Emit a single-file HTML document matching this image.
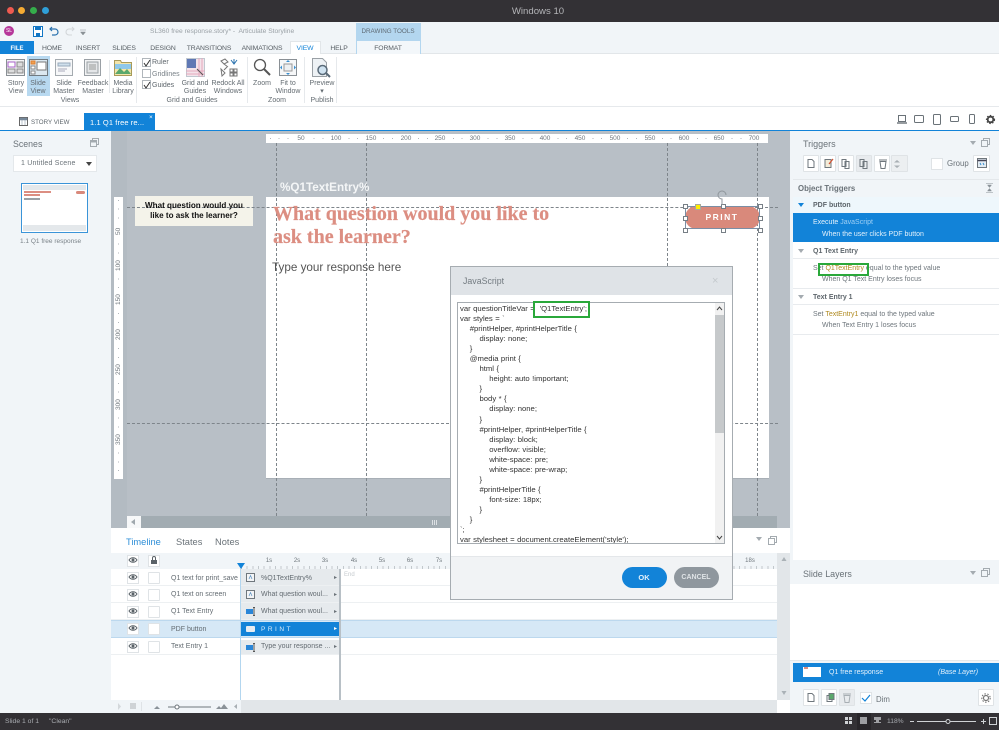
<!DOCTYPE html>
<html><head><meta charset="utf-8"><style>
html,body{margin:0;padding:0;background:#fff}
#r{position:relative;width:999px;height:730px;overflow:hidden;font-family:"Liberation Sans",sans-serif;font-size:7px;color:#5e666c;background:#fff;filter:blur(.3px)}
#r div,#r span.t,#r svg{position:absolute}
.t{position:absolute;white-space:nowrap;line-height:10px;margin-top:2px}
.c{transform:translateX(-50%);text-align:center}
.tab{top:41.500px;font-size:6.800px;color:#565d63;letter-spacing:-.1px}
.rl{font-size:7px;color:#646c72;text-align:center;line-height:8px;transform:translateX(-50%);white-space:nowrap}
.sep{background:#e6e9ec;width:1px;top:57px;height:46px}
.ck{width:7px;height:7px;border:1px solid #b0b6bb;background:#fff}
.rn{position:absolute;top:134px;font-size:6.500px;color:#6f777d;transform:translateX(-50%);line-height:9px;white-space:nowrap;background:#fff;padding:0 2px}
.rv{left:114px;width:9px;font-size:6.500px;color:#6f777d;height:14px;line-height:9px;writing-mode:vertical-rl;transform:rotate(180deg);text-align:center;background:#fff}
.gv{top:143px;height:373px;width:0;border-left:1px dashed #7e858b}
.gh{height:0;left:127px;width:651px;border-top:1px dashed #7e858b}
.h{width:3px;height:3px;border:1px solid #777f86;background:#fff}
.code{left:460px;color:#333;white-space:pre}
.row{left:111px;width:666px;height:17px;border-bottom:1px solid #edf0f2;box-sizing:border-box}
.eb{left:127px;width:10px;height:10px;border:1px solid #dfe3e6;background:#fff}
.lb{left:148px;width:10px;height:10px;border:1px solid #dfe3e6;background:#fff;border-radius:1px}
.bar{left:241px;width:98px;height:16px;background:#e6eaed}
.tl{font-size:7px;color:#646c72}
.ts{position:absolute;top:557px;font-size:6px;color:#6f777d;transform:translateX(-50%);line-height:8px}
.tb{top:155px;width:14px;height:15px;border:1px solid #dfe3e6;background:#fff;border-radius:1px}
.hd{left:793px;width:206px;height:17px;background:#fff;border-bottom:1px solid #e8ebee;box-sizing:border-box}
.tr{font-size:7px;color:#6e767c}
.trb{font-size:7px;font-weight:bold;color:#5e666c}
</style></head><body><div id="r">

<!-- title bar -->
<div style="left:0;top:0;width:999px;height:22px;background:#333135"></div>
<div style="left:6.500px;top:6.500px;width:7px;height:7px;border-radius:50%;background:#ef5a50"></div>
<div style="left:18px;top:6.500px;width:7px;height:7px;border-radius:50%;background:#f5ab33"></div>
<div style="left:30px;top:6.500px;width:7px;height:7px;border-radius:50%;background:#35ad4b"></div>
<div style="left:42px;top:6.500px;width:7px;height:7px;border-radius:50%;background:#2f9fd8"></div>
<span class="t c" style="left:538px;top:3.500px;color:#b4b5b8;font-size:9.600px;line-height:11px">Windows 10</span>

<!-- QAT -->
<div style="left:0;top:22px;width:999px;height:32px;background:#f1f5f8;border-bottom:1px solid #e2e6e9;box-sizing:border-box"></div>
<div style="left:4px;top:26px;width:10px;height:10px;border-radius:50%;background:#b6379a"></div>
<span class="t c" style="left:9px;top:24px;color:#fff;font-size:5px">SL</span>
<svg style="left:33px;top:26px" width="10" height="11" viewBox="0 0 10 11"><path d="M.5.5h9v10h-9z" fill="#fff" stroke="#1276c4"/><path d="M2 1h6v3H2zM3 7h4v3H3z" fill="#1276c4"/></svg>
<svg style="left:49px;top:26px" width="10" height="10" viewBox="0 0 10 10"><path d="M3 1 1 3l2 2M1 3h5a3 3 0 0 1 0 6H3" fill="none" stroke="#2a72ae" stroke-width="1.200"/></svg>
<svg style="left:65px;top:26px" width="10" height="10" viewBox="0 0 10 10"><path d="M7 1l2 2-2 2M9 3H4a3 3 0 0 0 0 6h3" fill="none" stroke="#d2d6d9" stroke-width="1.100"/></svg>
<svg style="left:80px;top:29px" width="6" height="6" viewBox="0 0 6 6"><path d="M0 1h6M.5 3h5L3 6z" fill="#8a9196" stroke="#8a9196" stroke-width=".5"/></svg>
<span class="t" style="left:150px;top:25px;font-size:6.700px;color:#9aa1a6">SL360 free response.story* -&nbsp; Articulate Storyline</span>

<!-- tabs -->
<div style="left:0;top:41px;width:34px;height:13px;background:#1283d8"></div>
<span class="t c" style="left:17px;top:41.500px;color:#fff;font-size:6px;font-weight:bold">FILE</span>
<span class="t tab c" style="left:52px">HOME</span>
<span class="t tab c" style="left:88px">INSERT</span>
<span class="t tab c" style="left:124px">SLIDES</span>
<span class="t tab c" style="left:163px">DESIGN</span>
<span class="t tab c" style="left:209px">TRANSITIONS</span>
<span class="t tab c" style="left:262px">ANIMATIONS</span>
<div style="left:290px;top:41px;width:31px;height:14px;background:#fff;border:1px solid #e2e6e9;border-bottom:0;box-sizing:border-box"></div>
<span class="t tab c" style="left:305px;color:#1283d8">VIEW</span>
<span class="t tab c" style="left:339px">HELP</span>
<div style="left:356px;top:23px;width:65px;height:18px;background:#b3d6ef"></div>
<span class="t c" style="left:388px;top:25px;font-size:6.300px;color:#5e6a74">DRAWING TOOLS</span>
<div style="left:356px;top:41px;width:65px;height:13px;background:#f3f7fa;border:1px solid #b3d6ef;border-bottom:0;border-top:0;box-sizing:border-box"></div>
<span class="t tab c" style="left:388px">FORMAT</span>

<!-- ribbon -->
<div style="left:0;top:54px;width:999px;height:52px;background:#fff;border-bottom:1px solid #e6e9ec"></div>
<div style="left:27px;top:56px;width:23px;height:40px;background:#b8d9f0"></div>
<svg style="left:6px;top:59px" width="19" height="17" viewBox="0 0 19 17"><rect x=".5" y=".5" width="18" height="16" fill="#f4f5f6" stroke="#8a9095"/><rect x="2" y="3" width="7" height="5" fill="#fff" stroke="#a860c8"/><rect x="11" y="3" width="6" height="5" fill="#ddd" stroke="#888"/><rect x="2" y="10" width="7" height="4" fill="#ddd" stroke="#888"/><rect x="11" y="10" width="6" height="4" fill="#ddd" stroke="#888"/></svg>
<svg style="left:29px;top:59px" width="19" height="17" viewBox="0 0 19 17"><rect x=".5" y=".5" width="18" height="16" fill="#dce8f0" stroke="#717a80"/><rect x="2" y="2" width="4" height="3" fill="#f0a050" stroke="#e08030"/><rect x="2" y="7" width="4" height="3" fill="#fff" stroke="#888"/><rect x="2" y="12" width="4" height="3" fill="#fff" stroke="#888"/><rect x="8" y="3" width="9" height="8" fill="#fff" stroke="#777"/></svg>
<svg style="left:55px;top:59px" width="18" height="17" viewBox="0 0 18 17"><rect x=".5" y=".5" width="17" height="16" fill="#f7f8f9" stroke="#a5abb0"/><rect x="3" y="4" width="12" height="3" fill="#d0e0ec" stroke="#9ab"/><path d="M3 10h9M3 12h7" stroke="#aab" fill="none"/></svg>
<svg style="left:84px;top:59px" width="17" height="17" viewBox="0 0 17 17"><rect x=".5" y=".5" width="16" height="16" fill="#f2f3f4" stroke="#9aa0a5"/><rect x="3" y="3" width="11" height="11" fill="#e4e6e8" stroke="#9aa0a5"/><path d="M5 6h7M5 8h7M5 10h7" stroke="#999"/></svg>
<div class="sep" style="left:109px;top:60px;height:33px"></div>
<svg style="left:114px;top:59px" width="18" height="17" viewBox="0 0 18 17"><path d="M.5 1.500h6l1 2h10v13H.5z" fill="#f4e5a8" stroke="#a89a5a"/><rect x="1" y="5" width="16" height="5" fill="#8ec8ea"/><path d="M1 15l5-6 4 4 3-3 4 5z" fill="#5aa86c"/></svg>
<div class="rl" style="left:16px;top:80px">Story<br>View</div>
<div class="rl" style="left:38px;top:80px">Slide<br>View</div>
<div class="rl" style="left:64px;top:80px">Slide<br>Master</div>
<div class="rl" style="left:93px;top:80px">Feedback<br>Master</div>
<div class="rl" style="left:123px;top:80px">Media<br>Library</div>
<div class="rl" style="left:70px;top:97px">Views</div>
<div class="sep" style="left:136px"></div>
<div class="ck" style="left:142px;top:58px"></div><div class="ck" style="left:142px;top:69px"></div><div class="ck" style="left:142px;top:80px"></div>
<svg style="left:143px;top:59px" width="8" height="8" viewBox="0 0 8 8"><path d="M1 4l2 3 4-6" fill="none" stroke="#333" stroke-width="1"/></svg>
<svg style="left:143px;top:81px" width="8" height="8" viewBox="0 0 8 8"><path d="M1 4l2 3 4-6" fill="none" stroke="#333" stroke-width="1"/></svg>
<span class="t" style="left:152px;top:56px;font-size:7px;color:#5e666c">Ruler</span>
<span class="t" style="left:152px;top:67.500px;font-size:7px;color:#7a8288">Gridlines</span>
<span class="t" style="left:152px;top:79px;font-size:7px;color:#5e666c">Guides</span>
<svg style="left:186px;top:58px" width="19" height="19" viewBox="0 0 19 19"><rect x=".5" y=".5" width="18" height="18" fill="#f3e3ea" stroke="#c0c8d0"/><rect x="1" y="1" width="9" height="9" fill="#5f78b4"/><path d="M13 0v19M16 0v19M0 13h19M0 16h19" stroke="#e4a8bc" fill="none"/><path d="M11 11l6 6" stroke="#555"/></svg>
<svg style="left:219px;top:58px" width="19" height="19" viewBox="0 0 19 19"><g fill="none" stroke="#777"><path d="M2 3l4-2 3 3-4 2zM5 6l4 3"/><rect x="11" y="11" width="3" height="3"/><rect x="15" y="11" width="3" height="3"/><rect x="11" y="15" width="3" height="3"/><rect x="15" y="15" width="3" height="3"/><path d="M2 11l4 4-3 3zM8 9l-3 3"/></g><path d="M12 2l3 4 3-4M15 1v5" fill="none" stroke="#2a72ae"/></svg>
<div class="rl" style="left:195px;top:80px">Grid and<br>Guides</div>
<div class="rl" style="left:228px;top:80px">Redock All<br>Windows</div>
<div class="rl" style="left:192px;top:97px">Grid and Guides</div>
<div class="sep" style="left:247px"></div>
<svg style="left:253px;top:58px" width="18" height="18" viewBox="0 0 18 18"><circle cx="7" cy="7" r="5.500" fill="#fff" stroke="#555" stroke-width="1.300"/><path d="M11 11l6 6" stroke="#555" stroke-width="2"/></svg>
<svg style="left:279px;top:59px" width="18" height="17" viewBox="0 0 18 17"><rect x=".5" y=".5" width="17" height="16" fill="#f6f7f8" stroke="#8a9095"/><rect x="5" y="5" width="8" height="7" fill="#eef0f2" stroke="#999"/><path d="M9 1l2 2H7zM9 16l2-2H7zM1 8.500l2-2v4zM17 8.500l-2-2v4z" fill="#3a8fd0"/></svg>
<div class="rl" style="left:262px;top:80px">Zoom</div>
<div class="rl" style="left:288px;top:80px">Fit to<br>Window</div>
<div class="rl" style="left:277px;top:97px">Zoom</div>
<div class="sep" style="left:304px"></div>
<svg style="left:312px;top:58px" width="20" height="20" viewBox="0 0 20 20"><path d="M.5.5h10l4 4v14H.5z" fill="#eef2f5" stroke="#9aa0a5"/><circle cx="10.500" cy="12" r="4.500" fill="#cfe2f0" stroke="#5a6a78" stroke-width="1.500"/><path d="M14 15l4 4" stroke="#5a6a78" stroke-width="2"/></svg>
<div class="rl" style="left:322px;top:80px">Preview<br>▾</div>
<div class="rl" style="left:322px;top:97px">Publish</div>
<div class="sep" style="left:336px"></div>

<!-- view tabs -->
<svg style="left:19px;top:117px" width="9" height="9" viewBox="0 0 9 9"><rect x=".5" y=".5" width="8" height="8" fill="#fff" stroke="#666"/><path d="M1 1h7v2H1zM3 3v5M6 3v5" fill="#789" stroke="#789" stroke-width=".5"/></svg>
<span class="t" style="left:31px;top:116px;font-size:6.200px;color:#5e666c">STORY VIEW</span>
<div style="left:84px;top:113px;width:71px;height:17px;background:#1283d8"></div>
<span class="t" style="left:90px;top:115.500px;color:#fff;font-size:7.500px;letter-spacing:.1px">1.1 Q1 free re...</span>
<span class="t" style="left:149px;top:111px;color:#fff;font-size:6.500px">×</span>
<svg style="left:896px;top:113px" width="100" height="12" viewBox="0 0 100 12"><g fill="none" stroke="#6a7278"><path d="M2.500 2.500h7v6h-7z"/><path d="M1 10h10" stroke-width="1.400"/><rect x="18.500" y="2.500" width="9" height="7" rx="1"/><rect x="37.500" y="1.500" width="7" height="10" rx="1"/><rect x="54.500" y="3.500" width="8" height="5" rx="1"/><rect x="73.500" y="1.500" width="5" height="9" rx="1"/></g><circle cx="94.500" cy="6.500" r="2.800" fill="none" stroke="#444" stroke-width="1.800"/><circle cx="94.500" cy="6.500" r="4" fill="none" stroke="#444" stroke-width="1.200" stroke-dasharray="1.500 1.500"/></svg>
<div style="left:0;top:130px;width:999px;height:1.500px;background:#1283d8"></div>

<!-- scenes panel -->
<div style="left:0;top:131px;width:111px;height:582px;background:#f1f5f8"></div>
<span class="t" style="left:13px;top:136px;font-size:8.800px;line-height:12px;color:#6a7278">Scenes</span>
<svg style="left:90px;top:138px" width="9" height="9" viewBox="0 0 9 9"><g fill="none" stroke="#a4abb0"><rect x=".5" y="2.500" width="6" height="6"/><path d="M2.500 2.500v-2h6v6h-2"/></g><rect x="1" y="3" width="5" height="1.500" fill="#a4abb0"/></svg>
<div style="left:13px;top:155px;width:84px;height:17px;background:#fff;border:1px solid #e4e8eb;box-sizing:border-box"></div>
<span class="t" style="left:21px;top:157px;font-size:7px;color:#6a7278;letter-spacing:.2px">1 Untitled Scene</span>
<svg style="left:86px;top:162px" width="6" height="4" viewBox="0 0 6 4"><path d="M0 0h6L3 4z" fill="#444"/></svg>
<div style="left:21px;top:183px;width:67px;height:50px;background:#fff;border:1.500px solid #3a94d8;box-sizing:border-box"></div>
<div style="left:23px;top:185px;width:63px;height:5px;background:#e4e8eb"></div>
<div style="left:23px;top:225px;width:63px;height:6px;background:#e4e8eb"></div>
<div style="left:24px;top:191px;width:27px;height:2px;background:#dc8e82"></div>
<div style="left:24px;top:194px;width:16px;height:2px;background:#dc8e82"></div>
<div style="left:24px;top:198px;width:16px;height:1.500px;background:#9ba0a5"></div>
<div style="left:76px;top:191px;width:9px;height:3px;background:#d9897b;border-radius:2px"></div>
<span class="t" style="left:20px;top:235px;font-size:6.500px;color:#7a8288">1.1 Q1 free response</span>

<!-- canvas -->
<div style="left:111px;top:131px;width:679px;height:397px;background:#b8bfc6"></div>
<div style="left:111px;top:131px;width:16px;height:397px;background:#b3bbc2"></div>
<div style="left:266px;top:134px;width:502px;height:9px;background:#fff"></div>
<div style="left:270px;top:138px;width:496px;height:1px;background:repeating-linear-gradient(90deg,#b0b6bb 0 1px,transparent 1px 8.710px)"></div>
<span class="rn" style="left:301px">50</span><span class="rn" style="left:336px">100</span><span class="rn" style="left:371px">150</span><span class="rn" style="left:406px">200</span><span class="rn" style="left:440px">250</span><span class="rn" style="left:475px">300</span><span class="rn" style="left:510px">350</span><span class="rn" style="left:545px">400</span><span class="rn" style="left:580px">450</span><span class="rn" style="left:615px">500</span><span class="rn" style="left:650px">550</span><span class="rn" style="left:684px">600</span><span class="rn" style="left:719px">650</span><span class="rn" style="left:754px">700</span>
<div style="left:114px;top:197px;width:9px;height:282px;background:#fff"></div>
<div style="left:118px;top:200px;width:1px;height:276px;background:repeating-linear-gradient(180deg,#b0b6bb 0 1px,transparent 1px 8.710px)"></div>
<div class="rv" style="top:224px">50</div><div class="rv" style="top:259px">100</div><div class="rv" style="top:293px">150</div><div class="rv" style="top:328px">200</div><div class="rv" style="top:363px">250</div><div class="rv" style="top:398px">300</div><div class="rv" style="top:433px">350</div>

<div style="left:266px;top:197px;width:503px;height:282px;background:#fff;border-bottom:1px solid #a8afb6;box-sizing:border-box"></div>
<div style="left:135px;top:196px;width:118px;height:30px;background:#f4f3ea"></div>
<div class="gv" style="left:276px"></div><div class="gv" style="left:366px"></div><div class="gv" style="left:667px"></div><div class="gv" style="left:757px"></div>
<div class="gh" style="top:207px"></div><div class="gh" style="top:423px"></div>

<div class="t" style="left:135px;top:199px;width:118px;text-align:center;font-size:8.100px;font-weight:bold;color:#111;line-height:10px;white-space:normal">What question would you<br>like to ask the learner?</div>
<span class="t" style="left:280px;top:179px;font-size:11.700px;line-height:14px;font-weight:bold;color:#f4f6f7">%Q1TextEntry%</span>
<div class="t" style="left:273px;top:200.500px;font-family:'Liberation Serif',serif;font-size:20px;font-weight:bold;color:#dc8e82;line-height:23.500px;-webkit-text-stroke:.2px #dc8e82">What question would you like to<br>ask the learner?</div>
<span class="t" style="left:272px;top:258px;font-size:11.700px;line-height:15px;color:#555">Type your response here</span>

<div style="left:685px;top:206px;width:75px;height:23px;border-radius:12px;background:#d9897b"></div>
<span class="t c" style="left:722px;top:209px;color:#fff;font-size:8.500px;line-height:12px;font-weight:bold;letter-spacing:1.500px">PRINT</span>
<div style="left:685px;top:206px;width:75px;height:23px;border:1px solid #7a8ea5;box-sizing:border-box"></div>
<div class="h" style="left:683px;top:204px"></div><div class="h" style="left:721px;top:204px"></div><div class="h" style="left:758px;top:204px"></div>
<div class="h" style="left:683px;top:216px"></div><div class="h" style="left:758px;top:216px"></div>
<div class="h" style="left:683px;top:228px"></div><div class="h" style="left:721px;top:228px"></div><div class="h" style="left:758px;top:228px"></div>
<div style="left:695px;top:204px;width:4px;height:4px;background:#ffee00;border:.5px solid #aa9"></div>
<svg style="left:717px;top:190px" width="11" height="15" viewBox="0 0 11 15"><path d="M9 5a4 4 0 1 0-4 4v6" fill="none" stroke="#8f969c"/></svg>

<div style="left:127px;top:516px;width:650px;height:12px;background:#a2acb2"></div>
<div style="left:127px;top:516px;width:14px;height:12px;background:#f7f8f9"></div>
<svg style="left:131px;top:519px" width="5" height="6"><path d="M4 0v6L0 3z" fill="#a0a8ae"/></svg>
<div style="left:432px;top:520px;width:5px;height:5px;background:repeating-linear-gradient(90deg,#dde1e4 0 1px,#a2acb2 1px 2px)"></div>

<!-- timeline -->
<div style="left:111px;top:528px;width:666px;height:185px;background:#fff"></div>
<span class="t" style="left:126px;top:534px;font-size:9.300px;line-height:12px;color:#2f8fd8">Timeline</span>
<span class="t" style="left:176px;top:534px;font-size:9.300px;line-height:12px;color:#6a7278">States</span>
<span class="t" style="left:215px;top:534px;font-size:9.300px;line-height:12px;color:#6a7278">Notes</span>
<svg style="left:756px;top:537px" width="6" height="4"><path d="M0 0h6L3 4z" fill="#a4abb0"/></svg>
<svg style="left:768px;top:536px" width="9" height="9" viewBox="0 0 9 9"><g fill="none" stroke="#a4abb0"><rect x=".5" y="2.500" width="6" height="6"/><path d="M2.500 2.500v-2h6v6h-2"/></g></svg>
<div style="left:111px;top:553px;width:666px;height:16px;background:#f1f5f8"></div>
<div style="left:777px;top:553px;width:13px;height:147px;background:#e2e6e9"></div>
<svg style="left:781px;top:557px" width="6" height="140"><path d="M3 0l2.500 4h-5zM3 138l2.500-4h-5z" fill="#aab1b6"/></svg>
<div style="left:241px;top:566px;width:536px;height:3px;background:repeating-linear-gradient(90deg,#c2c8cc 0 1px,transparent 1px 5.660px)"></div>
<span class="ts" style="left:269px">1s</span><span class="ts" style="left:297px">2s</span><span class="ts" style="left:325px">3s</span><span class="ts" style="left:354px">4s</span><span class="ts" style="left:382px">5s</span><span class="ts" style="left:410px">6s</span><span class="ts" style="left:439px">7s</span><span class="ts" style="left:750px">18s</span>

<div class="row" style="top:569px"></div><div class="row" style="top:586px"></div><div class="row" style="top:603px"></div>
<div style="left:111px;top:620px;width:666px;height:18px;background:#d6e8f6;border:1px solid #bcd8ee;border-width:1px 0;box-sizing:border-box"></div>
<div class="row" style="top:638px"></div>
<svg width="0" height="0" style="left:0;top:0"><defs><g id="eye"><path d="M1 4c2-3 6-3 8 0-2 3-6 3-8 0z" fill="#fff" stroke="#5a6268"/><circle cx="5" cy="4" r="1.500" fill="#5a6268"/></g></defs></svg>
<div class="eb" style="top:555px"></div>
<svg style="left:128px;top:556px" width="10" height="8"><use href="#eye"/></svg>
<div class="eb" style="top:555px;left:148px"></div>
<svg style="left:150px;top:556px" width="8" height="8" viewBox="0 0 8 8"><path d="M1 4h6v4H1z" fill="#5a6268"/><path d="M2.500 4V2a1.500 1.500 0 0 1 3 0v2" fill="none" stroke="#5a6268"/></svg>
<div class="eb" style="top:572px"></div><svg style="left:128px;top:573px" width="10" height="8"><use href="#eye"/></svg><div class="lb" style="top:572px"></div>
<div class="eb" style="top:589px"></div><svg style="left:128px;top:590px" width="10" height="8"><use href="#eye"/></svg><div class="lb" style="top:589px"></div>
<div class="eb" style="top:606px"></div><svg style="left:128px;top:607px" width="10" height="8"><use href="#eye"/></svg><div class="lb" style="top:606px"></div>
<div class="eb" style="top:623px"></div><svg style="left:128px;top:624px" width="10" height="8"><use href="#eye"/></svg><div class="lb" style="top:623px"></div>
<div class="eb" style="top:641px"></div><svg style="left:128px;top:642px" width="10" height="8"><use href="#eye"/></svg><div class="lb" style="top:641px"></div>
<span class="t tl" style="left:171px;top:572px">Q1 text for print_save</span>
<span class="t tl" style="left:171px;top:588px">Q1 text on screen</span>
<span class="t tl" style="left:171px;top:605px">Q1 Text Entry</span>
<span class="t tl" style="left:171px;top:623px">PDF button</span>
<span class="t tl" style="left:171px;top:640px">Text Entry 1</span>

<div style="left:240px;top:569px;width:1px;height:131px;background:#b3d6ef"></div>
<div style="left:339px;top:569px;width:1.500px;height:131px;background:#b8c0c6"></div>
<svg style="left:237px;top:563px" width="8" height="6"><path d="M0 0h8L4 6z" fill="#1283d8"/></svg>
<span class="t" style="left:344px;top:568px;font-size:6px;color:#c6cbcf">End</span>

<div class="bar" style="top:569px"></div><div class="bar" style="top:586px"></div><div class="bar" style="top:603px"></div>
<div class="bar" style="top:622px;height:14px;background:#1283d8"></div>
<div class="bar" style="top:640px;height:14px"></div>
<svg width="0" height="0" style="left:0;top:0"><defs><g id="txt"><rect x=".5" y=".5" width="8" height="8" fill="#f2f4f6" stroke="#6f777d"/><path d="M3 6l1.500-3.500L6 6" fill="none" stroke="#5a90c0" stroke-width=".7"/></g><g id="ent"><rect x="0" y="2" width="7" height="5" fill="#2a86d8"/><path d="M7 .5h2M8 .5v8M7 8.500h2" fill="none" stroke="#555"/></g></defs></svg>
<svg style="left:246px;top:573px" width="9" height="9"><use href="#txt"/></svg>
<svg style="left:246px;top:590px" width="9" height="9"><use href="#txt"/></svg>
<svg style="left:246px;top:607px" width="9" height="9"><use href="#ent"/></svg>
<div style="left:246px;top:626px;width:9px;height:6px;background:#e6ecf1;border-radius:1px"></div>
<svg style="left:246px;top:643px" width="9" height="9"><use href="#ent"/></svg>
<span class="t tl" style="left:261px;top:572px">%Q1TextEntry%</span>
<span class="t tl" style="left:261px;top:588px">What question woul...</span>
<span class="t tl" style="left:261px;top:605px">What question woul...</span>
<span class="t tl" style="left:261px;top:623px;color:#dcecf8;letter-spacing:2.500px;font-size:6.500px">PRINT</span>
<span class="t tl" style="left:261px;top:640px">Type your response ...</span>
<span class="t" style="left:334px;top:571px;font-size:6px;color:#6a7278">▸</span><span class="t" style="left:334px;top:588px;font-size:6px;color:#6a7278">▸</span><span class="t" style="left:334px;top:605px;font-size:6px;color:#6a7278">▸</span><span class="t" style="left:334px;top:622px;font-size:6px;color:#fff">▸</span><span class="t" style="left:334px;top:640px;font-size:6px;color:#6a7278">▸</span>

<div style="left:111px;top:700px;width:130px;height:13px;background:#f1f5f8"></div>
<div style="left:241px;top:700px;width:536px;height:13px;background:#e2e6e9"></div>
<svg style="left:111px;top:700px" width="135" height="13" viewBox="0 0 135 13"><path d="M7 3v7l3-3.500z" fill="#d4d8db"/><rect x="19" y="3" width="6" height="6" fill="#cfd3d6"/><path d="M30.500 2v9" stroke="#dfe3e6"/><path d="M43 9l3-3 3 3z" fill="#8a9298"/><path d="M57 7h43" stroke="#9aa1a6" stroke-width="1.500"/><circle cx="66" cy="7" r="2" fill="#fff" stroke="#6f777d"/><path d="M105 9l3-3 2 2 3-4 4 5z" fill="#8a9298"/><path d="M126 4v5l-3-2.500z" fill="#a8afb4"/></svg>

<!-- right panel -->
<div style="left:790px;top:131px;width:209px;height:582px;background:#f1f5f8"></div>
<span class="t" style="left:803px;top:136px;font-size:9px;line-height:12px;color:#6a7278">Triggers</span>
<svg style="left:970px;top:141px" width="6" height="4"><path d="M0 0h6L3 4z" fill="#a4abb0"/></svg>
<svg style="left:981px;top:138px" width="9" height="9" viewBox="0 0 9 9"><g fill="none" stroke="#a4abb0"><rect x=".5" y="2.500" width="6" height="6"/><path d="M2.500 2.500v-2h6v6h-2"/></g></svg>
<div class="tb" style="left:803px"></div><div class="tb" style="left:820px"></div><div class="tb" style="left:838px"></div><div class="tb" style="left:856px;background:#e8ebee"></div><div class="tb" style="left:874px"></div><div class="tb" style="left:891px;width:15px;background:#eceff1"></div>
<svg style="left:803px;top:155px" width="105" height="17" viewBox="0 0 105 17"><g fill="#fff" stroke="#6f777d"><path d="M5 4.500h4l2 2v6H5z"/><path d="M22 4.500h6v8h-6z" fill="#f3ecd8"/><path d="M39 4.500h4v7h-4zM42 6.500h4v7h-4z"/><path d="M57 4.500h4v7h-4zM60 6.500h4v7h-4z" fill="#eceff1"/><path d="M77 6.500h6l-1 7h-4zM76 5h8"/></g><path d="M26 9l4-5" stroke="#d05030" stroke-width="1.200"/><path d="M94 5l3 2.500h-6zM94 13l3-2.500h-6z" fill="#a8afb4"/></svg>
<div style="left:931px;top:158px;width:10px;height:10px;background:#fff;border:1px solid #dfe3e6"></div>
<span class="t" style="left:947px;top:157px;font-size:7.800px;color:#6a7278">Group</span>
<div class="tb" style="left:973px;width:15px"></div>
<svg style="left:977px;top:158px" width="11" height="11" viewBox="0 0 11 11"><rect x=".5" y=".5" width="9" height="9" fill="#e4ecf3" stroke="#6f777d"/><path d="M.5 2.500h9" stroke="#445" stroke-width="1.500"/><path d="M3 5l1 2M6 5l1 2" stroke="#3a8fd0"/></svg>

<div style="left:793px;top:179px;width:206px;height:381px;background:#fff"></div>
<div style="left:793px;top:179px;width:206px;height:18px;background:#f1f5f8;border-top:1px solid #e4e8eb;box-sizing:border-box"></div>
<span class="t" style="left:798px;top:182px;font-size:7.800px;font-weight:bold;color:#6a7278">Object Triggers</span>
<svg style="left:986px;top:183px" width="7" height="10" viewBox="0 0 7 10"><path d="M0 .5h7M0 9.500h7M1.500 2h4L3.500 4.500zM1.500 8h4L3.500 5.500z" fill="#8a9298" stroke="#8a9298" stroke-width=".5"/></svg>
<div style="left:793px;top:197px;width:206px;height:16px;background:#eef7fc"></div>
<svg style="left:798px;top:203px" width="6" height="4"><path d="M0 0h6L3 4z" fill="#1283d8"/></svg>
<span class="t trb" style="left:813px;top:199px">PDF button</span>
<div style="left:793px;top:213px;width:206px;height:29px;background:#1283d8"></div>
<span class="t tr" style="left:813px;top:216px;color:#e4f1fb">Execute <span style="color:#9fd0f5">JavaScript</span></span>
<span class="t tr" style="left:822px;top:228px;color:#e4f1fb">When the user clicks PDF button</span>
<div class="hd" style="top:242px"></div>
<svg style="left:798px;top:249px" width="6" height="4"><path d="M0 0h6L3 4z" fill="#a4abb0"/></svg>
<span class="t trb" style="left:813px;top:245px">Q1 Text Entry</span>
<span class="t tr" style="left:813px;top:262px">Set <span style="color:#b08a20">Q1TextEntry</span> equal to the typed value</span>
<span class="t tr" style="left:822px;top:273px">When Q1 Text Entry loses focus</span>
<div style="left:818px;top:263px;width:51px;height:13px;border:2px solid #2aa83a;box-sizing:border-box"></div>
<div class="hd" style="top:288px;border-top:1px solid #e8ebee"></div>
<svg style="left:798px;top:295px" width="6" height="4"><path d="M0 0h6L3 4z" fill="#a4abb0"/></svg>
<span class="t trb" style="left:813px;top:291px">Text Entry 1</span>
<span class="t tr" style="left:813px;top:308px">Set <span style="color:#b08a20">TextEntry1</span> equal to the typed value</span>
<span class="t tr" style="left:822px;top:319px">When Text Entry 1 loses focus</span>
<div style="left:793px;top:334px;width:206px;height:1px;background:#e8ebee"></div>

<span class="t" style="left:803px;top:566px;font-size:8.900px;line-height:12px;color:#6a7278">Slide Layers</span>
<svg style="left:970px;top:571px" width="6" height="4"><path d="M0 0h6L3 4z" fill="#a4abb0"/></svg>
<svg style="left:981px;top:568px" width="9" height="9" viewBox="0 0 9 9"><g fill="none" stroke="#a4abb0"><rect x=".5" y="2.500" width="6" height="6"/><path d="M2.500 2.500v-2h6v6h-2"/></g></svg>
<div style="left:790px;top:584px;width:209px;height:76px;background:#fff;border-bottom:1px solid #e4e8eb"></div>
<div style="left:793px;top:663px;width:206px;height:19px;background:#1283d8"></div>
<div style="left:803px;top:667px;width:18px;height:10px;background:#fff"></div>
<div style="left:804px;top:667px;width:4px;height:2px;background:#dc8e82"></div>
<span class="t" style="left:829px;top:666px;color:#e4f1fb;font-size:7px">Q1 free response</span>
<span class="t" style="left:938px;top:666px;color:#e4f1fb;font-size:7px;font-style:italic">(Base Layer)</span>
<div class="tb" style="left:803px;top:689px"></div><div class="tb" style="left:821px;top:689px"></div><div class="tb" style="left:839px;top:689px;background:#e8ebee"></div>
<svg style="left:803px;top:689px" width="55" height="17" viewBox="0 0 55 17"><g fill="#fff" stroke="#6f777d"><path d="M5 4.500h4l2 2v6H5z"/><path d="M24 6.500h5v6h-5z"/><path d="M26 4.500h5v6h-5z" fill="#5aa86c"/></g><path d="M41 6.500h6l-1 7h-4zM40 5h8" fill="none" stroke="#a8afb4"/></svg>
<div style="left:860px;top:692px;width:10px;height:10px;background:#fff;border:1px solid #dfe3e6"></div>
<svg style="left:860px;top:693px" width="12" height="10"><path d="M2 5l3 3 5-6" fill="none" stroke="#1283d8" stroke-width="1.200"/></svg>
<span class="t" style="left:876px;top:692.500px;font-size:7.800px;color:#6a7278">Dim</span>
<div class="tb" style="left:978px;top:689px"></div>
<svg style="left:980px;top:692px" width="12" height="12" viewBox="0 0 12 12"><circle cx="6" cy="6" r="2.500" fill="none" stroke="#777" stroke-width="1.200"/><circle cx="6" cy="6" r="4.200" fill="none" stroke="#777" stroke-width="1.100" stroke-dasharray="1.500 1.500"/></svg>

<!-- status -->
<div style="left:0;top:713px;width:999px;height:17px;background:#333135"></div>
<span class="t" style="left:5px;top:715px;font-size:6.800px;color:#a8abb0">Slide 1 of 1</span>
<span class="t" style="left:49px;top:715px;font-size:6.800px;color:#a8abb0">"Clean"</span>
<div style="left:857px;top:713px;width:14px;height:17px;background:#28262a"></div>
<svg style="left:845px;top:716px" width="154" height="11" viewBox="0 0 154 11"><g fill="#cfd2d5"><rect x="0" y="1" width="3" height="3"/><rect x="4" y="1" width="3" height="3"/><rect x="0" y="5" width="3" height="3"/><rect x="4" y="5" width="3" height="3"/><rect x="15" y="1" width="7" height="7" opacity=".7"/><path d="M29 1h7v3h-2v2h2v1h-7V6h2V4h-2z" opacity=".7"/></g><path d="M65 5.500h4M72 5.500h59M136 5.500h5M138.500 3v5" stroke="#cfd2d5" stroke-width="1"/><circle cx="103" cy="5.500" r="2" fill="#333135" stroke="#cfd2d5"/><rect x="144.500" y="1.500" width="7" height="7" fill="none" stroke="#cfd2d5"/></svg>
<span class="t" style="left:887px;top:715px;font-size:6.700px;color:#a8abb0">118%</span>

<!-- dialog -->
<div style="left:450px;top:266px;width:283px;height:334px;background:#fff;border:1px solid #a6acb1;box-sizing:border-box"></div>
<div style="left:451px;top:267px;width:281px;height:28px;background:#dfe3e7"></div>
<span class="t" style="left:463px;top:274px;font-size:8.800px;line-height:11px;color:#737b81">JavaScript</span>
<span class="t" style="left:712px;top:273px;font-size:11px;line-height:12px;color:#c4c9cd">×</span>
<div style="left:457px;top:302px;width:268px;height:242px;border:1px solid #a6acb1;box-sizing:border-box;background:#fff;overflow:hidden">
<span class="t code" style="left:2px;top:-1px;font-size:7.700px;line-height:10.040px;word-spacing:.3px">var questionTitleVar =  'Q1TextEntry';
var styles = `
    #printHelper, #printHelperTitle {
        display: none;
    }
    @media print {
        html {
            height: auto !important;
        }
        body * {
            display: none;
        }
        #printHelper, #printHelperTitle {
            display: block;
            overflow: visible;
            white-space: pre;
            white-space: pre-wrap;
        }
        #printHelperTitle {
            font-size: 18px;
        }
    }
`;
var stylesheet = document.createElement('style');</span>
</div>
<div style="left:715px;top:303px;width:9px;height:240px;background:#f1f1f1"></div>
<div style="left:715px;top:315px;width:9px;height:118px;background:#c6c9cb"></div>
<svg style="left:716px;top:306px" width="7" height="6"><path d="M1 4l2.500-3L6 4" fill="none" stroke="#444"/></svg>
<svg style="left:716px;top:535px" width="7" height="6"><path d="M1 1l2.500 3L6 1" fill="none" stroke="#444"/></svg>
<div style="left:533px;top:301px;width:57px;height:17px;border:2px solid #2aa83a;box-sizing:border-box"></div>
<div style="left:451px;top:556px;width:281px;height:43px;background:#f1f3f5;border-top:1px solid #e4e7ea;box-sizing:border-box"></div>
<div style="left:622px;top:567px;width:45px;height:21px;border-radius:11px;background:#1283d8"></div>
<span class="t c" style="left:644px;top:571px;color:#e4f1fb;font-size:7.500px;font-weight:bold">OK</span>
<div style="left:674px;top:567px;width:45px;height:21px;border-radius:11px;background:#8f979e"></div>
<span class="t c" style="left:696px;top:571px;color:#dfe3e6;font-size:7px;font-weight:bold">CANCEL</span>

</div></body></html>
